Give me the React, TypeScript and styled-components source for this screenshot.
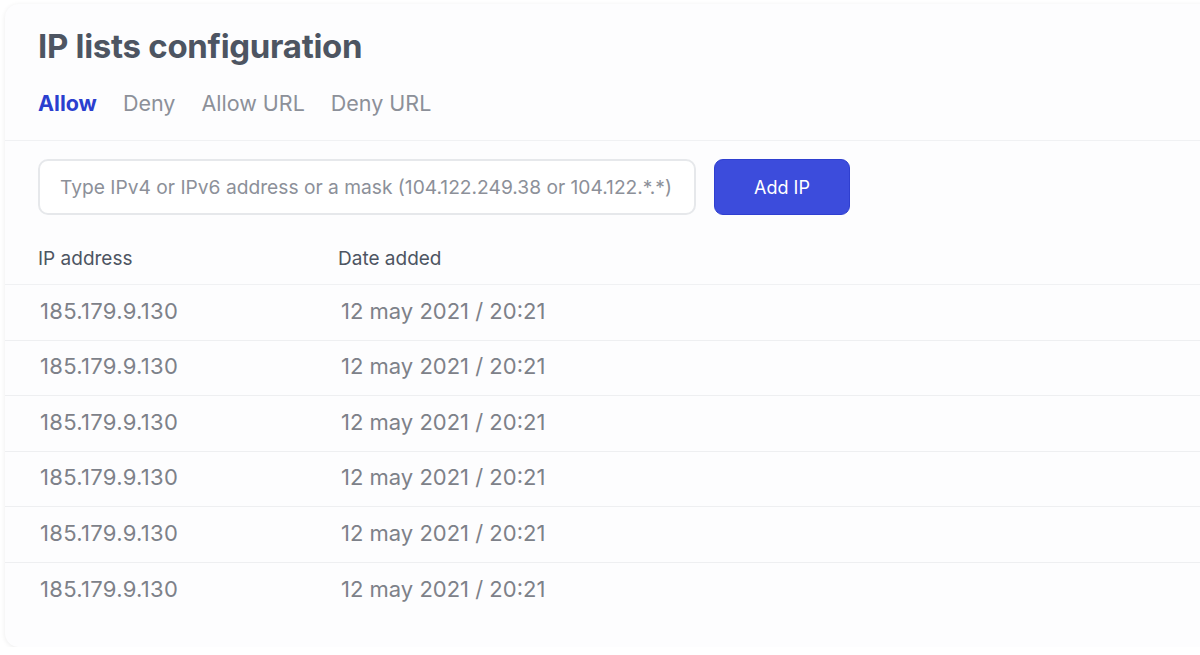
import React, { useState } from 'react';
import styled, { createGlobalStyle } from 'styled-components';

const TABS = ['Allow', 'Deny', 'Allow URL', 'Deny URL'];

const ROWS = Array.from({ length: 6 }, () => ({
  ip: '185.179.9.130',
  date: '12 may 2021 / 20:21',
}));

const App = () => {
  const [tab, setTab] = useState('Allow');
  const [value, setValue] = useState('');

  return (
    <>
      <GlobalStyle />
      <Card>
        <Head>
          <Title>IP lists configuration</Title>
          <Tabs>
            {TABS.map((t) => (
              <Tab key={t} $active={t === tab} onClick={() => setTab(t)}>
                {t}
              </Tab>
            ))}
          </Tabs>
        </Head>
        <Toolbar>
          <Input
            type="text"
            placeholder="Type IPv4 or IPv6 address or a mask (104.122.249.38 or 104.122.*.*)"
            value={value}
            onChange={(e) => setValue(e.target.value)}
          />
          <AddButton>Add IP</AddButton>
        </Toolbar>
        <Table>
          <HeadRow>
            <HeadCell>IP address</HeadCell>
            <HeadCell>Date added</HeadCell>
          </HeadRow>
          {ROWS.map((r, i) => (
            <Row key={i} $last={i === ROWS.length - 1}>
              <IpCell>{r.ip}</IpCell>
              <Cell>{r.date}</Cell>
            </Row>
          ))}
        </Table>
      </Card>
    </>
  );
};

const GlobalStyle = createGlobalStyle`
  html, body {
    margin: 0;
    background: #ffffff;
    overflow: hidden;
  }
  body {
    font-family: Inter, "Noto Sans", sans-serif;
  }
  * {
    box-sizing: border-box;
  }
`;

const Card = styled.div`
  margin: 4px -40px 0 5px;
  height: 643px;
  background: #fdfdfe;
  border-radius: 14px;
  box-shadow: 0 1px 5px rgba(0, 0, 0, 0.08);
`;

const Head = styled.div`
  padding: 22px 0 0 33px;
  border-bottom: 1px solid #f0f1f3;
`;

const Title = styled.h1`
  margin: 0;
  font-size: 33px;
  line-height: 40px;
  font-weight: 700;
  color: #4d5562;
  letter-spacing: -0.3px;
`;

const Tabs = styled.div`
  display: flex;
  gap: 26px;
  padding: 22px 0 22px;
`;

const Tab = styled.button<{ $active?: boolean }>`
  border: 0;
  background: none;
  padding: 0;
  font-family: inherit;
  font-size: 21.5px;
  line-height: 30px;
  font-weight: ${(p) => (p.$active ? 700 : 400)};
  color: ${(p) => (p.$active ? '#2b3fcf' : '#8c9099')};
  cursor: pointer;
`;

const Toolbar = styled.div`
  display: flex;
  gap: 18px;
  padding: 18px 33px 0;
`;

const Input = styled.input`
  width: 658px;
  height: 56px;
  border: 2px solid #e6e8eb;
  border-radius: 10px;
  background: #ffffff;
  padding: 0 20px;
  font-family: inherit;
  font-size: 19.2px;
  color: #4d5562;
  outline: none;

  &::placeholder {
    color: #8c9099;
  }
`;

const AddButton = styled.button`
  width: 136px;
  height: 56px;
  border: 1px solid #2f3fd0;
  border-radius: 9px;
  background: #3c4cdc;
  color: #ffffff;
  font-family: inherit;
  font-size: 18px;
  cursor: pointer;
`;

const Table = styled.div``;

const HeadRow = styled.div`
  display: grid;
  grid-template-columns: 300px 1fr;
  align-items: start;
  height: 70px;
  padding: 31px 0 0 33px;
  border-bottom: 1px solid #f0f1f3;
`;

const HeadCell = styled.div`
  font-size: 19px;
  line-height: 26px;
  color: #4d5562;
`;

const Row = styled.div<{ $last?: boolean }>`
  display: grid;
  grid-template-columns: 301px 1fr;
  align-items: center;
  height: 55.5px;
  padding: 0 0 3px 35px;
  border-bottom: ${(p) => (p.$last ? 'none' : '1px solid #eeeff1')};
`;

const Cell = styled.div`
  font-size: 22px;
  line-height: 28px;
  color: #7d8189;
`;

const IpCell = styled(Cell)`
  letter-spacing: 0.3px;
`;

export default App;
